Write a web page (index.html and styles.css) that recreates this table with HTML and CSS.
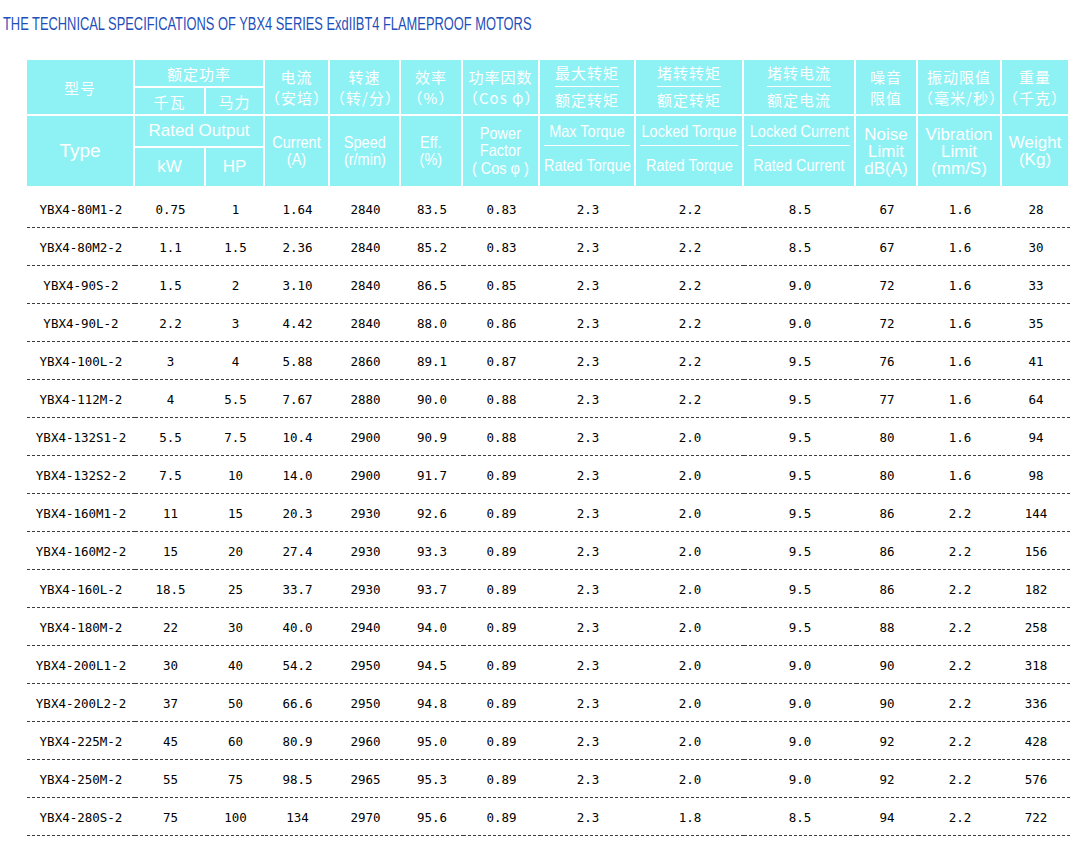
FILE: index.html
```html
<!DOCTYPE html>
<html lang="zh">
<head>
<meta charset="utf-8">
<title>YBX4 Technical Specifications</title>
<link rel="stylesheet" href="styles.css">
</head>
<body>
<h1 class="title"><span>THE TECHNICAL SPECIFICATIONS OF YBX4 SERIES ExdIIBT4 FLAMEPROOF MOTORS</span></h1>
<table class="spec">
  <colgroup>
    <col><col><col><col><col><col><col><col><col><col><col><col><col>
  </colgroup>
  <thead>
    <tr class="h1">
      <th rowspan="2" class="zh">型号</th>
      <th colspan="2" class="zh">额定功率</th>
      <th rowspan="2" class="zh">电流<br>（安培）</th>
      <th rowspan="2" class="zh">转速<br>（转/分）</th>
      <th rowspan="2" class="zh">效率<br>（%）</th>
      <th rowspan="2" class="zh">功率因数<br>（Cos φ）</th>
      <th rowspan="2" class="zh frac"><div class="fz"><span class="fz-num">最大转矩</span><span class="fz-den">额定转矩</span></div></th>
      <th rowspan="2" class="zh frac"><div class="fz"><span class="fz-num">堵转转矩</span><span class="fz-den">额定转矩</span></div></th>
      <th rowspan="2" class="zh frac"><div class="fz"><span class="fz-num">堵转电流</span><span class="fz-den">额定电流</span></div></th>
      <th rowspan="2" class="zh">噪音<br>限值</th>
      <th rowspan="2" class="zh">振动限值<br>（毫米/秒）</th>
      <th rowspan="2" class="zh">重量<br>（千克）</th>
    </tr>
    <tr class="h2">
      <th class="zh">千瓦</th>
      <th class="zh">马力</th>
    </tr>
    <tr class="h3">
      <th rowspan="2" class="en type">Type</th>
      <th colspan="2" class="en">Rated Output</th>
      <th rowspan="2" class="cn"><span class="cx">Current<br>(A)</span></th>
      <th rowspan="2" class="cn"><span class="cx">Speed<br>(r/min)</span></th>
      <th rowspan="2" class="cn"><span class="cx">Eff.<br>(%)</span></th>
      <th rowspan="2" class="cn"><span class="cx">Power<br>Factor<br>( Cos φ )</span></th>
      <th rowspan="2" class="cn frac"><div class="fe"><span class="fe-num"><span class="cx">Max Torque</span></span><span class="fe-den"><span class="cx">Rated Torque</span></span></div></th>
      <th rowspan="2" class="cn frac"><div class="fe"><span class="fe-num"><span class="cx">Locked Torque</span></span><span class="fe-den"><span class="cx">Rated Torque</span></span></div></th>
      <th rowspan="2" class="cn frac"><div class="fe"><span class="fe-num"><span class="cx">Locked Current</span></span><span class="fe-den"><span class="cx">Rated Current</span></span></div></th>
      <th rowspan="2" class="en tight">Noise<br>Limit<br>dB(A)</th>
      <th rowspan="2" class="en tight">Vibration<br>Limit<br>(mm/S)</th>
      <th rowspan="2" class="en tight">Weight<br>(Kg)</th>
    </tr>
    <tr class="h4">
      <th class="en">kW</th>
      <th class="en">HP</th>
    </tr>
  </thead>
  <tbody>
    <tr><td>YBX4-80M1-2</td><td>0.75</td><td>1</td><td>1.64</td><td>2840</td><td>83.5</td><td>0.83</td><td>2.3</td><td>2.2</td><td>8.5</td><td>67</td><td>1.6</td><td>28</td></tr>
    <tr><td>YBX4-80M2-2</td><td>1.1</td><td>1.5</td><td>2.36</td><td>2840</td><td>85.2</td><td>0.83</td><td>2.3</td><td>2.2</td><td>8.5</td><td>67</td><td>1.6</td><td>30</td></tr>
    <tr><td>YBX4-90S-2</td><td>1.5</td><td>2</td><td>3.10</td><td>2840</td><td>86.5</td><td>0.85</td><td>2.3</td><td>2.2</td><td>9.0</td><td>72</td><td>1.6</td><td>33</td></tr>
    <tr><td>YBX4-90L-2</td><td>2.2</td><td>3</td><td>4.42</td><td>2840</td><td>88.0</td><td>0.86</td><td>2.3</td><td>2.2</td><td>9.0</td><td>72</td><td>1.6</td><td>35</td></tr>
    <tr><td>YBX4-100L-2</td><td>3</td><td>4</td><td>5.88</td><td>2860</td><td>89.1</td><td>0.87</td><td>2.3</td><td>2.2</td><td>9.5</td><td>76</td><td>1.6</td><td>41</td></tr>
    <tr><td>YBX4-112M-2</td><td>4</td><td>5.5</td><td>7.67</td><td>2880</td><td>90.0</td><td>0.88</td><td>2.3</td><td>2.2</td><td>9.5</td><td>77</td><td>1.6</td><td>64</td></tr>
    <tr><td>YBX4-132S1-2</td><td>5.5</td><td>7.5</td><td>10.4</td><td>2900</td><td>90.9</td><td>0.88</td><td>2.3</td><td>2.0</td><td>9.5</td><td>80</td><td>1.6</td><td>94</td></tr>
    <tr><td>YBX4-132S2-2</td><td>7.5</td><td>10</td><td>14.0</td><td>2900</td><td>91.7</td><td>0.89</td><td>2.3</td><td>2.0</td><td>9.5</td><td>80</td><td>1.6</td><td>98</td></tr>
    <tr><td>YBX4-160M1-2</td><td>11</td><td>15</td><td>20.3</td><td>2930</td><td>92.6</td><td>0.89</td><td>2.3</td><td>2.0</td><td>9.5</td><td>86</td><td>2.2</td><td>144</td></tr>
    <tr><td>YBX4-160M2-2</td><td>15</td><td>20</td><td>27.4</td><td>2930</td><td>93.3</td><td>0.89</td><td>2.3</td><td>2.0</td><td>9.5</td><td>86</td><td>2.2</td><td>156</td></tr>
    <tr><td>YBX4-160L-2</td><td>18.5</td><td>25</td><td>33.7</td><td>2930</td><td>93.7</td><td>0.89</td><td>2.3</td><td>2.0</td><td>9.5</td><td>86</td><td>2.2</td><td>182</td></tr>
    <tr><td>YBX4-180M-2</td><td>22</td><td>30</td><td>40.0</td><td>2940</td><td>94.0</td><td>0.89</td><td>2.3</td><td>2.0</td><td>9.5</td><td>88</td><td>2.2</td><td>258</td></tr>
    <tr><td>YBX4-200L1-2</td><td>30</td><td>40</td><td>54.2</td><td>2950</td><td>94.5</td><td>0.89</td><td>2.3</td><td>2.0</td><td>9.0</td><td>90</td><td>2.2</td><td>318</td></tr>
    <tr><td>YBX4-200L2-2</td><td>37</td><td>50</td><td>66.6</td><td>2950</td><td>94.8</td><td>0.89</td><td>2.3</td><td>2.0</td><td>9.0</td><td>90</td><td>2.2</td><td>336</td></tr>
    <tr><td>YBX4-225M-2</td><td>45</td><td>60</td><td>80.9</td><td>2960</td><td>95.0</td><td>0.89</td><td>2.3</td><td>2.0</td><td>9.0</td><td>92</td><td>2.2</td><td>428</td></tr>
    <tr><td>YBX4-250M-2</td><td>55</td><td>75</td><td>98.5</td><td>2965</td><td>95.3</td><td>0.89</td><td>2.3</td><td>2.0</td><td>9.0</td><td>92</td><td>2.2</td><td>576</td></tr>
    <tr><td>YBX4-280S-2</td><td>75</td><td>100</td><td>134</td><td>2970</td><td>95.6</td><td>0.89</td><td>2.3</td><td>1.8</td><td>8.5</td><td>94</td><td>2.2</td><td>722</td></tr>
  </tbody>
</table>
</body>
</html>
```

FILE: styles.css
```css
* { box-sizing: border-box; }

body {
  margin: 0;
  background: #fff;
  font-family: "Liberation Sans", Arial, sans-serif;
}

.title {
  margin: 0;
  height: 60px;
  padding: 14px 0 0 3px;
  font-size: 18px;
  line-height: 20px;
  font-weight: normal;
  color: #1d4fbb;
}

.title span {
  display: inline-block;
  white-space: nowrap;
  transform: scaleX(0.715);
  transform-origin: left center;
}

.spec {
  margin-left: 27px;
  border-collapse: separate;
  border-spacing: 0;
  table-layout: fixed;
  width: 1043px;
}

.spec col:nth-child(1) { width: 108px; }
.spec col:nth-child(2) { width: 71px; }
.spec col:nth-child(3) { width: 59px; }
.spec col:nth-child(4) { width: 65px; }
.spec col:nth-child(5) { width: 71px; }
.spec col:nth-child(6) { width: 62px; }
.spec col:nth-child(7) { width: 77px; }
.spec col:nth-child(8) { width: 96px; }
.spec col:nth-child(9) { width: 108px; }
.spec col:nth-child(10) { width: 112px; }
.spec col:nth-child(11) { width: 62px; }
.spec col:nth-child(12) { width: 84px; }
.spec col:nth-child(13) { width: 68px; }

.spec th {
  background: #8ef2f5;
  color: #fff;
  padding: 0;
  border-right: 2px solid #fff;
  border-bottom: 2px solid #fff;
  text-align: center;
  vertical-align: middle;
  font-weight: normal;
  overflow: visible;
}

.h1 { height: 28px; }
.h2 { height: 28px; }
.h3 { height: 32px; }
.h4 { height: 40px; }

.zh {
  font-family: "Noto Sans CJK SC", sans-serif;
  font-weight: 700;
  font-size: 15px;
  line-height: 21px;
  letter-spacing: 1px;
}

.en {
  font-family: "Liberation Sans", Arial, sans-serif;
  font-weight: 700;
  font-size: 17px;
  line-height: 20px;
}

.en.type { font-size: 19px; }
.en.tight { line-height: 17px; }

.cn {
  font-family: "Liberation Sans", Arial, sans-serif;
  font-size: 16.5px;
  line-height: 17.5px;
}

.cx {
  display: inline-block;
  white-space: nowrap;
  margin: 0 -30px;
  transform: scaleX(0.88);
}

.spec th.frac { vertical-align: top; }

.fz {
  display: flex;
  flex-direction: column;
  align-items: center;
}

.fz-num {
  height: 27px;
  line-height: 26px;
  border-bottom: 1.5px solid #fff;
}

.fz-den {
  line-height: 26px;
}

.fe {
  display: flex;
  flex-direction: column;
}

.fe-num {
  height: 30px;
  line-height: 30px;
  margin: 0 4px;
  border-bottom: 1.5px solid #fff;
}

.fe-den {
  line-height: 38px;
}

.spec td {
  height: 38px;
  padding: 0;
  text-align: center;
  vertical-align: middle;
  font-family: "DejaVu Sans Mono", monospace;
  font-size: 12.5px;
  color: #000;
  white-space: nowrap;
  background: linear-gradient(90deg, #3c3c3c 3px, transparent 3px) left bottom / 5px 1px repeat-x;
}

.spec tbody tr:first-child td {
  height: 40px;
  padding-top: 2px;
}
```
